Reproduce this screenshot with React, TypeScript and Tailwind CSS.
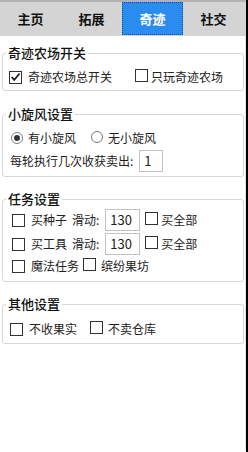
import React from "react";

const font = { fontFamily: '"Noto Sans CJK SC", "Noto Sans", sans-serif' };

function Check({ checked = false }: { checked?: boolean }) {
    return (
        <span className="relative inline-flex w-[13px] h-[13px] shrink-0 border border-[#333] bg-white items-center justify-center">
            {checked && (
                <svg viewBox="0 0 12 12" className="w-[12px] h-[12px]">
                    <path d="M1.8 6 L4.6 9.2 L10.4 2.2" fill="none" stroke="#1a1a1a" strokeWidth="1.9" />
                </svg>
            )}
        </span>
    );
}

function Radio({ checked = false }: { checked?: boolean }) {
    return (
        <span className="inline-flex w-[12px] h-[12px] shrink-0 rounded-full border border-[#777] bg-white items-center justify-center">
            {checked && <span className="w-[6px] h-[6px] rounded-full bg-[#333]" />}
        </span>
    );
}

function Group({ title, className, children }: { title: string; className?: string; children: React.ReactNode }) {
    return (
        <fieldset className={`ml-[2px] w-[242px] border border-[#d4d8dc] rounded-[3px] ${className ?? ""}`}>
            <legend className="ml-[3px] px-[2px] text-[13px] leading-[14px] font-medium text-[#111]">{title}</legend>
            {children}
        </fieldset>
    );
}

function Field({ value, w }: { value: string; w: string }) {
    return (
        <span className={`inline-flex h-[22px] ${w} border border-[#c2c2c2] bg-white items-start pl-[4px] pt-[1px] text-[13px] leading-[18px] text-[#222]`}>
            {value}
        </span>
    );
}

export default function App() {
    const tabs = ["主页", "拓展", "奇迹", "社交"];
    return (
        <div className="w-[248px] h-[452px] bg-white border-r-2 border-black text-[12px] text-[#222] overflow-hidden" style={font}>
            <div className="flex h-[36px] bg-[#d4d4d4] border-t-2 border-[#b2b2b2]">
                {tabs.map((t) => (
                    <div
                        key={t}
                        className={`w-[61px] flex items-center justify-center text-[13px] font-bold ${t === "奇迹" ? "bg-[#2a8cf0] text-white border border-dotted border-[#0d4f9e] mb-[1px]" : "text-[#111]"}`}
                    >
                        {t}
                    </div>
                ))}
            </div>
            <div className="border-r border-[#e4e4e4] h-[414px] pt-[10px]">
                <Group title="奇迹农场开关" className="pb-[3px]">
                    <div className="flex items-center h-[20px] mt-[7px] pl-[6px]">
                        <Check checked />
                        <span className="ml-[6px]">奇迹农场总开关</span>
                        <span className="ml-[23px]"><Check /></span>
                        <span className="ml-[3px]">只玩奇迹农场</span>
                    </div>
                </Group>

                <Group title="小旋风设置" className="mt-[16px] pb-[4px]">
                    <div className="flex items-center h-[20px] mt-[7px] pl-[8px]">
                        <Radio checked />
                        <span className="ml-[5px]">有小旋风</span>
                        <span className="ml-[15px]"><Radio /></span>
                        <span className="ml-[5px]">无小旋风</span>
                    </div>
                    <div className="flex items-center h-[22px] mt-[2px] pl-[7px]">
                        <span>每轮执行几次收获卖出:</span>
                        <span className="ml-[6px]"><Field value="1" w="w-[24px]" /></span>
                    </div>
                </Group>

                <Group title="任务设置" className="mt-[15px] pb-[5px]">
                    {["买种子", "买工具"].map((label, i) => (
                        <div key={label} className={`flex items-center h-[22px] pl-[9px] ${i === 0 ? "mt-[3px]" : "mt-[2px]"}`}>
                            <Check />
                            <span className="ml-[6px]">{label}</span>
                            <span className="ml-[5px]">滑动:</span>
                            <span className="ml-[6px]"><Field value="130" w="w-[35px]" /></span>
                            <span className="ml-[5px]"><Check /></span>
                            <span className="ml-[3px]">买全部</span>
                        </div>
                    ))}
                    <div className="flex items-center h-[20px] mt-[1px] pl-[9px]">
                        <Check />
                        <span className="ml-[6px]">魔法任务</span>
                        <span className="ml-[4px]"><Check /></span>
                        <span className="ml-[5px]">缤纷果坊</span>
                    </div>
                </Group>

                <Group title="其他设置" className="mt-[15px] pb-[4px]">
                    <div className="flex items-center h-[20px] mt-[8px] pl-[7px]">
                        <Check />
                        <span className="ml-[6px]">不收果实</span>
                        <span className="ml-[13px]"><Check /></span>
                        <span className="ml-[5px]">不卖仓库</span>
                    </div>
                </Group>
            </div>
        </div>
    );
}
